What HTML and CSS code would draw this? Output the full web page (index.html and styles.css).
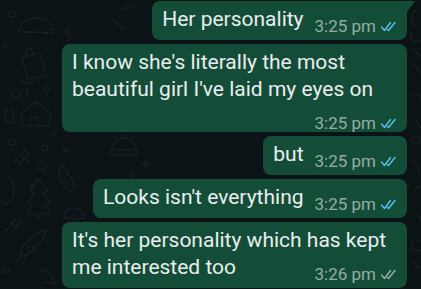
FILE: index.html
```html
<!DOCTYPE html>
<html lang="en">
<head>
  <meta charset="UTF-8">
  <meta name="viewport" content="width=device-width, initial-scale=1.0">
  <title>Chat</title>
  <link rel="stylesheet" href="styles.css">
</head>
<body>
  <div class="chat">
    <!-- wallpaper doodles -->
    <svg class="doodles" viewBox="0 0 421 289" width="421" height="289">
      <g fill="none" stroke="currentColor" stroke-width="1.2" stroke-linecap="round" stroke-linejoin="round">
        <path d="M18 32c2-12 16-18 28-12 6 3 8 8 7 13z M22 31l28 2"/>
        <circle cx="50" cy="29" r="1"/><circle cx="46" cy="33" r="1"/>
        <circle cx="12" cy="14" r="3"/><circle cx="5" cy="45" r="2.5"/>
        <path d="M70 26l-4 8h5l-3 7"/>
        <path d="M22 58l18-5 6 22-18 5z M27 56l-2-6 6-2 2 6"/>
        <path d="M20 80c4 4 10 4 14 1"/>
        <path d="M12 92h8v6h-8z"/>
        <path d="M48 84l-4 6h5l-3 6"/>
        <path d="M22 112l14-10 14 10v14h-28z M30 126v-9h8v9"/>
        <path d="M27 96c-2-3 2-5 0-8"/>
        <path d="M5 110c4-2 8 0 8 4v8c-4 2-8 0-8-4z"/>
        <circle cx="12" cy="142" r="3"/><circle cx="45" cy="148" r="3"/><circle cx="66" cy="150" r="2"/>
        <path d="M56 132l-5 5"/>
        <path d="M15 160l10-10 4 4-10 10z M22 156l8 8"/>
        <path d="M62 165c-6 8-2 20 8 26 6-2 6-8 2-12-4-4-4-10-10-14z M64 172l6 4 M62 180l7 3"/>
        <circle cx="42" cy="166" r="4"/><circle cx="32" cy="186" r="2"/>
        <path d="M38 178l-8 14h5l-7 12h5l-6 10h24l-6-10h5l-7-12h5z M38 214v6"/>
        <path d="M8 176c6 4 8 14 4 24-4 6-10 4-12 0"/>
        <path d="M14 218l3 4 4 1-4 2-1 4-2-4-4-1 4-2z"/>
        <path d="M74 208c6 0 10 4 10 10h-20c0-6 4-10 10-10z M74 218v8"/>
        <path d="M20 252c6-12 16-20 26-22-2 10-10 20-22 26z M30 246a3 3 0 1 0 1 0 M22 254l-6 8 M26 258l-4 6"/>
        <path d="M4 232l4-3"/>
        <circle cx="6" cy="270" r="3"/>
        <path d="M40 270c8 0 14 6 14 14 M44 283c6-2 10 0 12 4"/>
        <path d="M120 10l20-6 M112 18l12 12"/>
        <path d="M112 150c0-8 6-12 12-12s12 4 12 12z M110 150h28v5h-28z M124 138v-4"/>
        <path d="M145 160l2 3 3 1-3 1-1 3-1-3-3-1 3-1z"/>
        <circle cx="132" cy="176" r="2"/>
        <path d="M416 10c-6 4-6 12 0 16 M412 32a6 6 0 1 0 9 0"/>
        <path d="M414 50l6 6 M412 66c4 0 8 4 8 8"/>
        <path d="M412 96c6-4 10 0 9 6 M416 120l4 8"/>
        <circle cx="416" cy="140" r="4"/>
        <path d="M412 160c4 2 8 8 6 14 M414 190l6-4 M412 212c5 0 9 4 9 9"/>
        <path d="M414 240a6 6 0 1 0 6 0 M413 262l6 6"/>
      </g>
    </svg>

    <div class="thread">
      <div class="msg msg-first">
        <span class="text">Her personality</span><span class="meta"><span class="time">3:25 pm</span><svg class="ticks read" viewBox="0 0 17 11" width="17" height="11"><path d="M1.5 6l3 3.5 6-8M7.5 8.5l1 1 6.5-8"/></svg></span>
      </div>
      <div class="msg">
        <span class="text">I know she's literally the most beautiful girl I've laid my eyes on</span><span class="meta"><span class="time">3:25 pm</span><svg class="ticks read" viewBox="0 0 17 11" width="17" height="11"><path d="M1.5 6l3 3.5 6-8M7.5 8.5l1 1 6.5-8"/></svg></span>
      </div>
      <div class="msg">
        <span class="text">but</span><span class="meta"><span class="time">3:25 pm</span><svg class="ticks read" viewBox="0 0 17 11" width="17" height="11"><path d="M1.5 6l3 3.5 6-8M7.5 8.5l1 1 6.5-8"/></svg></span>
      </div>
      <div class="msg">
        <span class="text">Looks isn't everything</span><span class="meta"><span class="time">3:25 pm</span><svg class="ticks read" viewBox="0 0 17 11" width="17" height="11"><path d="M1.5 6l3 3.5 6-8M7.5 8.5l1 1 6.5-8"/></svg></span>
      </div>
      <div class="msg">
        <span class="text">It's her personality which has kept me interested too</span><span class="meta"><span class="time">3:26 pm</span><svg class="ticks" viewBox="0 0 17 11" width="17" height="11"><path d="M1.5 6l3 3.5 6-8M7.5 8.5l1 1 6.5-8"/></svg></span>
      </div>
    </div>
  </div>
</body>
</html>
```

FILE: styles.css
```css
* {
  margin: 0;
  padding: 0;
  box-sizing: border-box;
}

body {
  background: #0c1317;
  height: 100vh;
  overflow: hidden;
  font-family: Roboto, "Noto Sans", sans-serif;
}

.chat {
  position: relative;
  height: 100vh;
  overflow: hidden;
}

.doodles {
  position: absolute;
  top: 0;
  left: 0;
  color: rgba(255, 255, 255, 0.06);
}

.thread {
  position: relative;
  display: flex;
  flex-direction: column;
  align-items: flex-end;
  gap: 4px;
  padding: 1px 14px 0 0;
}

.msg {
  position: relative;
  max-width: 345px;
  background: #144d37;
  color: #e9edef;
  border-radius: 8px;
  padding: 5px 10px 7px;
  font-size: 21px;
  line-height: 27px;
}

.msg-first {
  border-top-right-radius: 0;
}

/* tail on the first bubble of the group */
.msg-first::after {
  content: "";
  position: absolute;
  top: 0;
  right: -8px;
  border-top: 11px solid #144d37;
  border-right: 8px solid transparent;
}

.meta {
  float: right;
  display: flex;
  align-items: center;
  gap: 4px;
  margin: 12px 0 -6px 11px;
  font-size: 17px;
  line-height: 16px;
  color: rgba(233, 237, 239, 0.6);
}

.ticks {
  fill: none;
  stroke: rgba(233, 237, 239, 0.6);
  stroke-width: 1.5;
  stroke-linecap: round;
  stroke-linejoin: round;
}

.ticks.read {
  stroke: #53bdeb;
}
```
